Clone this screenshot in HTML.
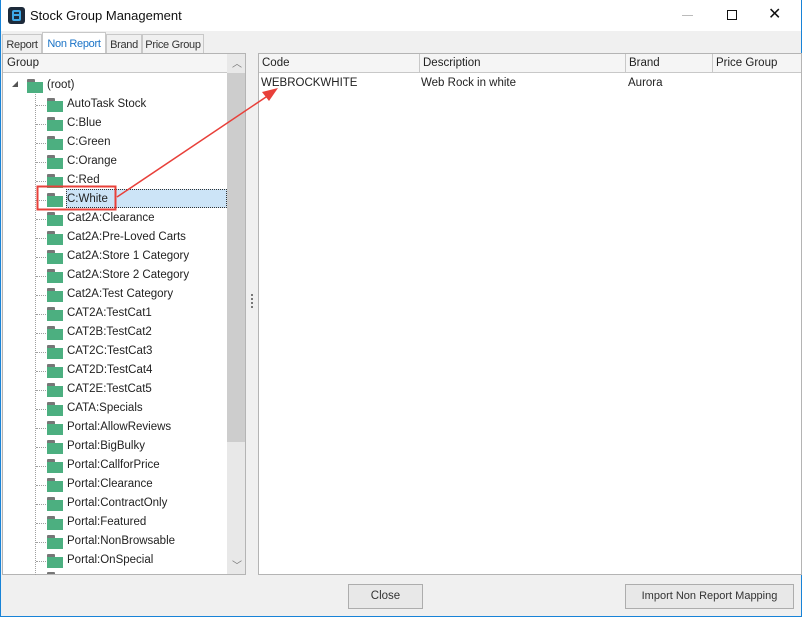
<!DOCTYPE html>
<html><head><style>
*{margin:0;padding:0;box-sizing:border-box}
body{width:802px;height:617px;background:#f0f0f0;font-family:"Liberation Sans",sans-serif;font-size:11.5px;color:#222;position:relative;overflow:hidden}
.abs{position:absolute}
.title{left:0;top:0;width:802px;height:31px;background:#fff}
.tab{top:34px;height:20px;border:1px solid #c8c8c8;border-bottom:none;background:#f0f0f0;padding:4px 0 0;text-align:center;font-size:11px;letter-spacing:-0.3px;color:#333;white-space:nowrap;overflow:hidden}
.panel{background:#fff;border:1px solid #b4b4b4}
.hdr{background:#f5f5f5;border-bottom:1px solid #c8c8c8;height:19px;line-height:18px;padding-left:4px}
.row{position:absolute;left:67px;height:19px;line-height:19px;white-space:nowrap}
.fold{position:absolute;left:47px;width:16px;height:14px}
.fold:before{content:"";position:absolute;left:0;top:0;width:8px;height:3px;background:#777;border-radius:1px 1px 0 0}
.fold:after{content:"";position:absolute;left:0;top:3px;width:16px;height:11px;background:#4caf80}
.dot{position:absolute;left:36px;height:1px;width:10px;border-top:1px dotted #a0a0a0}
.btn{border:1px solid #adadad;background:#e8e8e8;text-align:center;line-height:23px;color:#333;white-space:nowrap}
</style></head><body>
<div class="abs title"></div>
<div class="abs" style="left:0;top:0;width:1px;height:617px;background:#1883d7"></div>
<div class="abs" style="left:801px;top:0;width:1px;height:617px;background:#1883d7"></div>
<div class="abs" style="left:0;top:616px;width:802px;height:1px;background:#1883d7"></div>
<div class="abs" style="left:8px;top:7px;width:17px;height:17px;background:#1d2a3a;border-radius:3px"><div style="position:absolute;left:4px;top:3px;width:9px;height:11px;border:2px solid #3ea8e6;border-radius:2px"></div><div style="position:absolute;left:4px;top:7px;width:9px;height:2px;background:#3ea8e6"></div></div>
<div class="abs" style="left:30px;top:8px;font-size:13px;color:#111">Stock Group Management</div>
<div class="abs" style="left:682px;top:15px;width:11px;height:1px;background:#bbb"></div>
<div class="abs" style="left:727px;top:10px;width:10px;height:10px;border:1px solid #111"></div>
<div class="abs" style="left:768px;top:4px;font-size:16px;color:#111">✕</div>

<div class="abs tab" style="left:2px;width:40px">Report</div>
<div class="abs tab" style="left:42px;top:32px;height:22px;width:64px;background:#fff;color:#1a73c7;padding-top:5px">Non Report</div>
<div class="abs tab" style="left:106px;width:36px">Brand</div>
<div class="abs tab" style="left:142px;width:62px">Price Group</div>

<div class="abs panel" style="left:2px;top:53px;width:244px;height:522px;overflow:hidden">
 <div class="hdr" style="width:224px">Group</div>
 <div class="abs" style="left:224px;top:0;width:18px;height:520px;background:#e8e8e8"></div>
 <div class="abs" style="left:224px;top:19px;width:18px;height:369px;background:#cdcdcd"></div>
 <div class="abs" style="left:229px;top:1px;color:#777;font-size:10px">︿</div>
 <div class="abs" style="left:229px;top:503px;color:#777;font-size:10px">﹀</div>
</div>
<div class="abs" style="left:35px;top:91px;width:1px;height:484px;border-left:1px dotted #a0a0a0"></div>
<div class="abs" style="left:12px;top:81px;width:0;height:0;border-left:6px solid transparent;border-bottom:6px solid #555"></div>
<div class="abs fold" style="left:27px;top:79px"></div>
<div class="row" style="left:47px;top:76px">(root)</div>

<div class="abs" style="left:66px;top:189px;width:161px;height:19px;background:#cce4f7;border:1px dotted #333"></div>

<div id="tree"></div>
<script>
var items=["AutoTask Stock","C:Blue","C:Green","C:Orange","C:Red","C:White","Cat2A:Clearance","Cat2A:Pre-Loved Carts","Cat2A:Store 1 Category","Cat2A:Store 2 Category","Cat2A:Test Category","CAT2A:TestCat1","CAT2B:TestCat2","CAT2C:TestCat3","CAT2D:TestCat4","CAT2E:TestCat5","CATA:Specials","Portal:AllowReviews","Portal:BigBulky","Portal:CallforPrice","Portal:Clearance","Portal:ContractOnly","Portal:Featured","Portal:NonBrowsable","Portal:OnSpecial"];
var h="";
items.forEach(function(t,i){var y=95+i*19;h+='<div class="dot" style="top:'+(y+10)+'px"></div><div class="fold" style="top:'+(y+3)+'px"></div><div class="row" style="top:'+y+'px">'+t+'</div>';});
h+='<div class="fold" style="top:572px;height:2px;overflow:hidden"></div>';
document.getElementById("tree").innerHTML=h;
</script>

<div class="abs" style="left:251px;top:294px;width:2px;height:14px;background:repeating-linear-gradient(#777 0 2px,transparent 2px 4px)"></div>

<div class="abs panel" style="left:258px;top:53px;width:544px;height:522px">
 <div class="hdr" style="position:relative;padding-left:0">
  <span class="abs" style="left:3px">Code</span>
  <span class="abs" style="left:160px;border-left:1px solid #c8c8c8;padding-left:3px;height:19px">Description</span>
  <span class="abs" style="left:366px;border-left:1px solid #c8c8c8;padding-left:3px;height:19px">Brand</span>
  <span class="abs" style="left:453px;border-left:1px solid #c8c8c8;padding-left:3px;height:19px">Price Group</span>
 </div>
 <div class="abs" style="left:2px;top:23px">WEBROCKWHITE</div>
 <div class="abs" style="left:162px;top:23px">Web Rock in white</div>
 <div class="abs" style="left:369px;top:23px">Aurora</div>
</div>

<svg class="abs" style="left:0;top:0" width="802" height="617">
 <rect x="37.5" y="186.5" width="78" height="23" fill="none" stroke="#e8403a" stroke-width="2"/>
 <line x1="117" y1="197" x2="272" y2="93" stroke="#e8403a" stroke-width="1.5"/>
 <polygon points="278,88 262,92 269,101" fill="#e8403a"/>
</svg>

<div class="abs btn" style="left:348px;top:584px;width:75px;height:25px">Close</div>
<div class="abs btn" style="left:625px;top:584px;width:169px;height:25px;font-size:11px">Import Non Report Mapping</div>
</body></html>
